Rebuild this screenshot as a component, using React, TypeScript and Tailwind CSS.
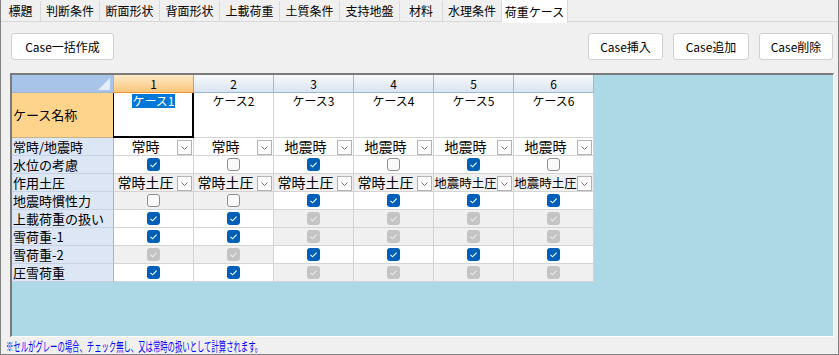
import React from 'react';

type Cell =
  | { kind: 'drop'; text: string; gray?: boolean }
  | { kind: 'check'; on: boolean; gray?: boolean; disabled?: boolean };

const tabs = [
  { label: '標題', w: 'w-[40px]' },
  { label: '判断条件', w: 'w-[59px]' },
  { label: '断面形状', w: 'w-[60px]' },
  { label: '背面形状', w: 'w-[60px]' },
  { label: '上載荷重', w: 'w-[60px]' },
  { label: '土質条件', w: 'w-[60px]' },
  { label: '支持地盤', w: 'w-[60px]' },
  { label: '材料', w: 'w-[43px]' },
  { label: '水理条件', w: 'w-[59px]' },
  { label: '荷重ケース', w: 'w-[66px]', active: true },
];

const on = (gray = false): Cell => ({ kind: 'check', on: true, gray });
const off = (gray = false): Cell => ({ kind: 'check', on: false, gray });
const dis = (): Cell => ({ kind: 'check', on: true, gray: true, disabled: true });

const rows: { label: string; cells: Cell[] }[] = [
  {
    label: '常時/地震時',
    cells: ['常時', '常時', '地震時', '地震時', '地震時', '地震時'].map(t => ({ kind: 'drop', text: t })),
  },
  { label: '水位の考慮', cells: [on(), off(), on(), off(), on(), off()] },
  {
    label: '作用土圧',
    cells: ['常時土圧', '常時土圧', '常時土圧', '常時土圧', '地震時土圧', '地震時土圧'].map(t => ({ kind: 'drop', text: t, gray: true })),
  },
  { label: '地震時慣性力', cells: [off(true), off(true), on(), on(), on(), on()] },
  { label: '上載荷重の扱い', cells: [on(), on(), dis(), dis(), dis(), dis()] },
  { label: '雪荷重-1', cells: [on(), on(), dis(), dis(), dis(), dis()] },
  { label: '雪荷重-2', cells: [dis(), dis(), on(), on(), on(), on()] },
  { label: '圧雪荷重', cells: [on(), on(), dis(), dis(), dis(), dis()] },
];

function CheckBox({ on, disabled }: { on: boolean; disabled?: boolean }) {
  if (!on) {
    return <span className="block w-[13px] h-[13px] rounded-[3px] border border-[#8e8e8e] bg-[#fbfbfb]" />;
  }
  return (
    <span className={`flex w-[13px] h-[13px] rounded-[3px] ${disabled ? 'bg-[#c4c4c4]' : 'bg-[#005fb8]'}`}>
      <svg width="13" height="13" viewBox="0 0 13 13">
        <path d="M3.5 6.8 L5.6 8.8 L9.6 4.6" fill="none" stroke={disabled ? '#ececec' : '#ffffff'} strokeWidth="1.1" />
      </svg>
    </span>
  );
}

function DropButton() {
  return (
    <span className="self-end mr-[1px] w-[15px] h-[15px] shrink-0 border border-[#b4b4b4] bg-white flex">
      <svg width="13" height="13" viewBox="0 0 13 13">
        <path d="M3.5 5.5 L6.5 8.5 L9.5 5.5" fill="none" stroke="#707070" strokeWidth="1" />
      </svg>
    </span>
  );
}

function DataCell({ cell }: { cell: Cell }) {
  const bg = cell.gray ? 'bg-[#f0f0f0]' : 'bg-white';
  if (cell.kind === 'drop') {
    const size = cell.text.length > 4 ? 'text-[12.5px]' : 'text-[14px]';
    return (
      <div className={`flex border-r border-b border-[#d4d4d4] ${bg}`}>
        <div className={`flex-1 min-w-0 flex justify-center items-center whitespace-nowrap ${size} leading-[17px]`}>
          {cell.text}
        </div>
        <DropButton />
      </div>
    );
  }
  return (
    <div className={`flex items-center justify-center border-r border-b border-[#d4d4d4] ${bg}`}>
      <CheckBox on={cell.on} disabled={cell.disabled} />
    </div>
  );
}

export default function App() {
  return (
    <div className="w-[839px] h-[355px] bg-[#f0f0f0] border-x border-b border-[#808080] overflow-hidden text-black font-['Noto_Sans_CJK_JP',sans-serif]">
      {/* Tabs */}
      <div className="flex h-[22px] border-b border-[#d9d9d9]">
        {tabs.map(t => (
          <div
            key={t.label}
            className={`${t.w} flex items-center justify-center border-r border-[#d9d9d9] text-[12px] leading-none ${
              t.active ? 'bg-white h-[23px] -mb-px' : 'mt-px'
            }`}
          >
            {t.label}
          </div>
        ))}
      </div>

      {/* Buttons */}
      <div className="flex mt-[11px] pl-[10px] pr-[5px]">
        <button className="w-[103px] h-[27px] bg-white border border-[#d0d0d0] rounded-[3px] text-[12px]">Case一括作成</button>
        <div className="ml-auto flex gap-[10px]">
          <button className="w-[75px] h-[27px] bg-white border border-[#d0d0d0] rounded-[3px] text-[12px]">Case挿入</button>
          <button className="w-[76px] h-[27px] bg-white border border-[#d0d0d0] rounded-[3px] text-[12px]">Case追加</button>
          <button className="w-[74px] h-[27px] bg-white border border-[#d0d0d0] rounded-[3px] text-[12px]">Case削除</button>
        </div>
      </div>

      {/* Grid panel */}
      <div className="mt-[13px] ml-[9px] w-[824px] h-[264px] bg-[#add8e6] border-t-2 border-l-2 border-r border-b border-[#7a7a7a] border-r-white border-b-white">
        <div className="grid grid-cols-[102px_repeat(6,80px)] grid-rows-[18px_45px_repeat(8,18px)] w-fit text-[13px]">
          {/* corner */}
          <div className="relative bg-[#a9c4e9] border-r border-b border-[#9eb6ce]">
            <svg className="absolute right-[3px] bottom-[2px]" width="12" height="12" viewBox="0 0 12 12">
              <path d="M12 0 L12 12 L0 12 Z" fill="#e4edf8" />
            </svg>
          </div>
          {[1, 2, 3, 4, 5, 6].map(n => (
            <div
              key={n}
              className={`flex items-center justify-center text-[12px] leading-none border-r border-b ${
                n === 1
                  ? 'bg-linear-to-b from-[#fde9c6] to-[#f8c67b] border-[#f29436]'
                  : 'bg-linear-to-b from-[#f7fafd] to-[#dae4f1] border-[#9eb6ce]'
              }`}
            >
              {n}
            </div>
          ))}

          {/* case names */}
          <div className="flex items-center pl-[1px] bg-[#fed48c] border-r border-b border-[#f29436] border-b-[#c9b48a]">ケース名称</div>
          {[1, 2, 3, 4, 5, 6].map(n => (
            <div key={n} className="relative bg-white border-r border-b border-[#d4d4d4] flex justify-center pt-px text-[12px] leading-[13px]">
              {n === 1 ? <span className="bg-[#0078d7] text-white h-[14px]">ケース1</span> : <span>ケース{n}</span>}
              {n === 1 && (
                <div className="absolute -left-px top-0 -right-px -bottom-px border-l border-r-2 border-b-2 border-black pointer-events-none" />
              )}
            </div>
          ))}

          {rows.map(r => (
            <React.Fragment key={r.label}>
              <div className="flex items-center pl-[1px] bg-[#dce6f4] border-r border-b border-[#9eb6ce] border-b-[#c5d3e4] whitespace-nowrap">
                {r.label}
              </div>
              {r.cells.map((c, i) => (
                <DataCell key={i} cell={c} />
              ))}
            </React.Fragment>
          ))}
        </div>
      </div>

      {/* Note */}
      <div className="mt-[1px] pl-[5px] h-[15px] text-[13px] leading-[15px] text-[#0000ff] whitespace-nowrap">
        <span className="inline-block origin-left scale-x-[0.565]">※セルがグレーの場合、チェック無し、又は常時の扱いとして計算されます。</span>
      </div>
    </div>
  );
}
